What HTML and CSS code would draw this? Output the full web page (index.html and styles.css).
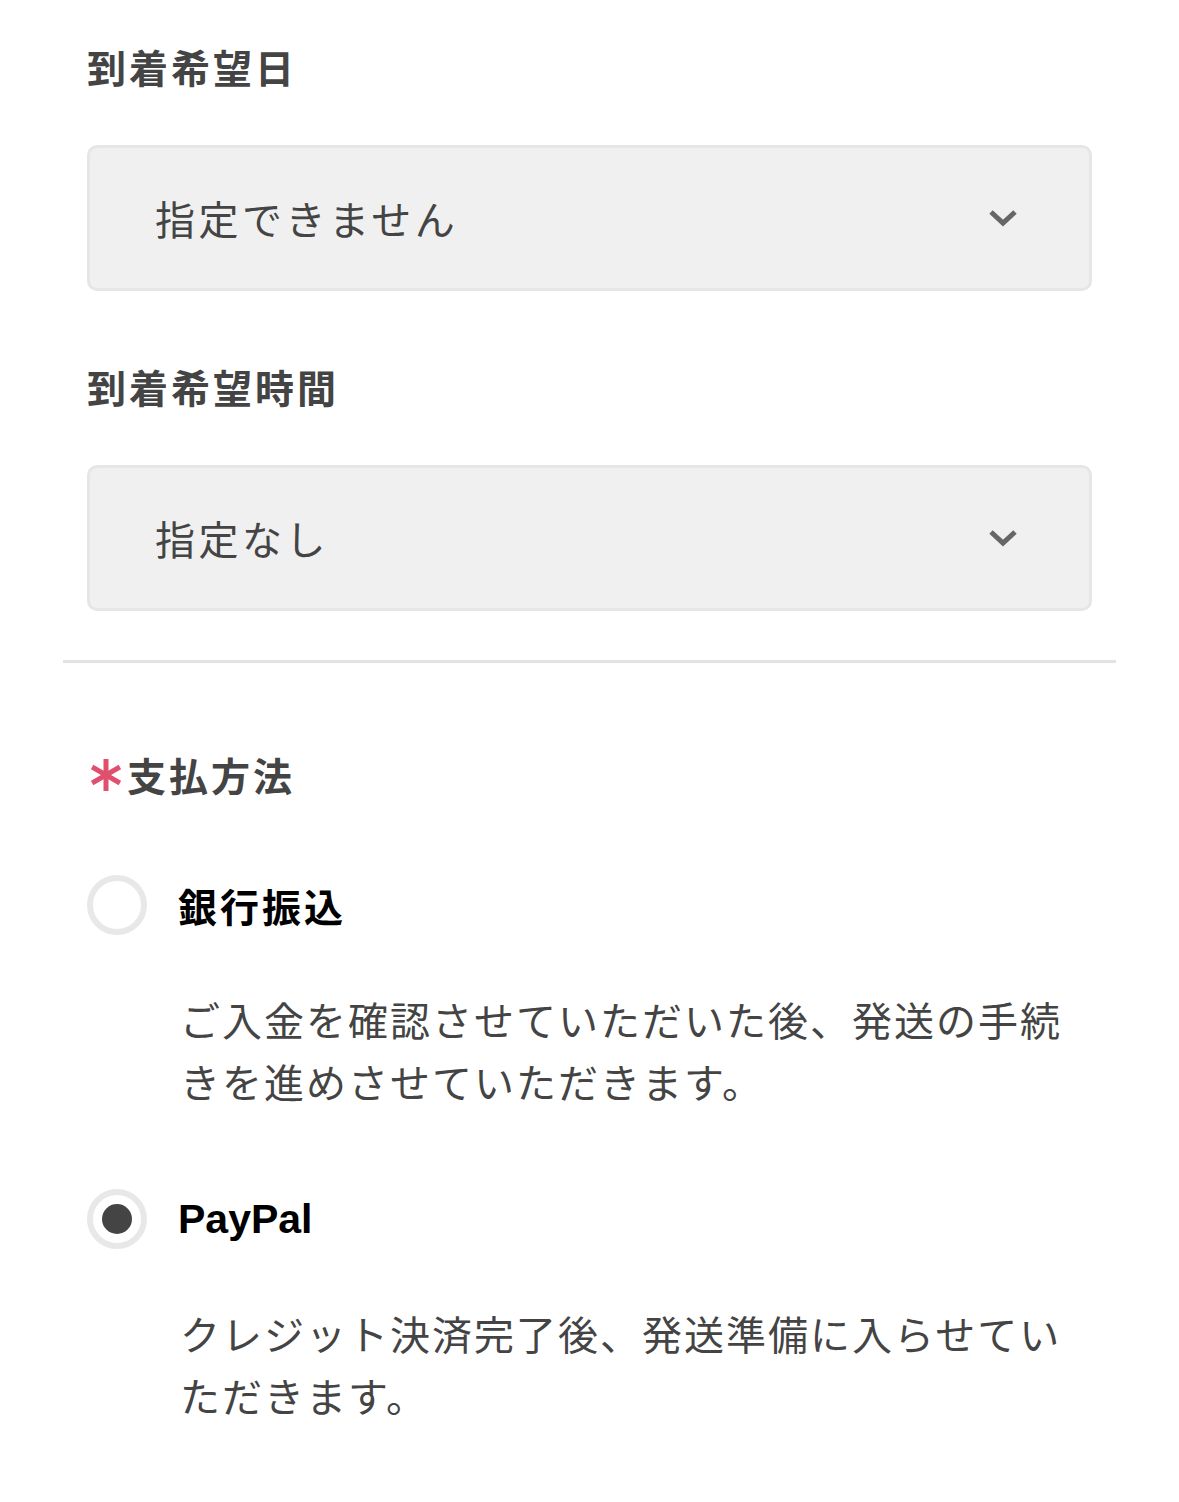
FILE: index.html
```html
<!DOCTYPE html>
<html lang="ja">

<head>
    <meta charset="UTF-8">
    <meta name="viewport" content="width=device-width, initial-scale=1.0">
    <title>お届け・お支払い</title>
    <link rel="stylesheet" href="styles.css">
</head>

<body>
    <div class="order-form">
        <!-- Delivery section -->
        <section class="field-group">
            <h2 class="field-label">到着希望日</h2>
            <div class="select-box">
                <span class="select-value">指定できません</span>
                <svg class="chevron" width="30" height="18" viewBox="0 0 30 18">
                    <path d="M3 3 L15 14 L27 3" fill="none" stroke="#666" stroke-width="5" />
                </svg>
            </div>

            <h2 class="field-label second">到着希望時間</h2>
            <div class="select-box">
                <span class="select-value">指定なし</span>
                <svg class="chevron" width="30" height="18" viewBox="0 0 30 18">
                    <path d="M3 3 L15 14 L27 3" fill="none" stroke="#666" stroke-width="5" />
                </svg>
            </div>
        </section>

        <hr class="divider">

        <!-- Payment section -->
        <section class="field-group">
            <h2 class="field-label required">
                <svg class="required-mark" width="30" height="34" viewBox="0 0 30 34">
                    <g stroke="#e0506e" stroke-width="5">
                        <line x1="15" y1="1" x2="15" y2="33" />
                        <line x1="1.1" y1="9" x2="28.9" y2="25" />
                        <line x1="1.1" y1="25" x2="28.9" y2="9" />
                    </g>
                </svg>
                支払方法
            </h2>

            <div class="pay-option">
                <div class="pay-row">
                    <span class="radio"></span>
                    <span class="pay-name">銀行振込</span>
                </div>
                <p class="pay-desc">ご入金を確認させていただいた後、発送の手続きを進めさせていただきます。</p>
            </div>

            <div class="pay-option">
                <div class="pay-row">
                    <span class="radio checked"></span>
                    <span class="pay-name latin">PayPal</span>
                </div>
                <p class="pay-desc">クレジット決済完了後、発送準備に入らせていただきます。</p>
            </div>
        </section>
    </div>
</body>

</html>
```

FILE: styles.css
```css
/* General styles */
body {
    font-family: "Noto Sans CJK JP", "Noto Sans", sans-serif;
    margin: 0;
    padding: 0;
    background-color: #fff;
    color: #444;
}

.order-form {
    padding: 0 63px;
}

.field-group {
    padding: 0 24px;
}

/* Labels */
.field-label {
    margin: 0;
    padding-top: 40px;
    font-size: 39px;
    font-weight: bold;
    line-height: 53px;
    letter-spacing: 3px;
    color: #444;
    display: flex;
    align-items: center;
}

.field-label.second {
    padding-top: 69px;
}

.field-label.required {
    padding-top: 85px;
}

.required-mark {
    margin: 0 6px 0 4px;
}

/* Select boxes */
.select-box {
    margin-top: 52px;
    height: 140px;
    background: #f0f0f0;
    border: 3px solid #e6e6e6;
    border-radius: 10px;
    display: flex;
    align-items: center;
    justify-content: space-between;
    padding: 0 71px 0 65px;
}

.select-value {
    font-size: 40px;
    letter-spacing: 3.5px;
    color: #444;
}

.chevron {
    display: block;
    margin-top: -1px;
}

.divider {
    margin: 49px 0 0;
    border: none;
    border-top: 3px solid #e3e3e3;
}

/* Payment options */
.pay-option {
    padding-top: 74px;
}

.pay-option + .pay-option {
    padding-top: 77px;
}

.pay-row {
    display: flex;
    align-items: center;
    gap: 31px;
}

.radio {
    width: 48px;
    height: 48px;
    border: 6px solid #e8e8e8;
    border-radius: 50%;
    display: flex;
    align-items: center;
    justify-content: center;
    flex-shrink: 0;
}

.radio.checked::after {
    content: "";
    width: 30px;
    height: 30px;
    border-radius: 50%;
    background: #444;
}

.pay-name {
    font-size: 39px;
    font-weight: bold;
    letter-spacing: 3px;
    color: #000;
}

.pay-name.latin {
    font-family: "Liberation Sans", Arial, sans-serif;
    font-size: 41px;
    letter-spacing: 0;
}

.pay-desc {
    margin: 53px 0 0 93px;
    font-size: 40px;
    line-height: 62px;
    letter-spacing: 2px;
    color: #444;
}
```
